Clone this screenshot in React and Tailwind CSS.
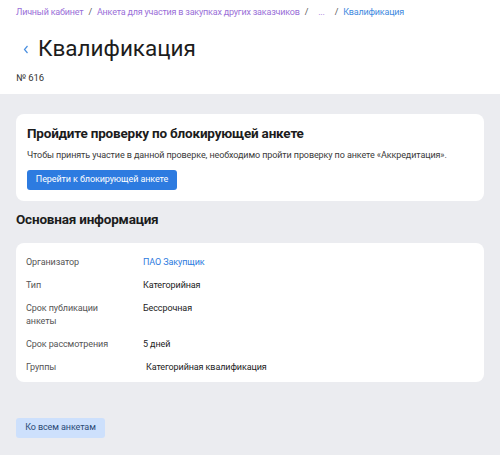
import React from "react";

export default function App() {
  const rows = [
    { label: "Организатор", value: "ПАО Закупщик", link: true },
    { label: "Тип", value: "Категорийная" },
    { label: "Срок публикации анкеты", value: "Бессрочная" },
    { label: "Срок рассмотрения", value: "5 дней" },
    { label: "Группы", value: "Категорийная квалификация", indent: true },
  ];
  return (
    <div className="w-[500px] h-[455px] bg-[#ebecf0] overflow-hidden text-[#222]" style={{ fontFamily: 'Roboto, "Liberation Sans", Arial, sans-serif' }}>
      <div className="bg-white px-4 pt-[6px] h-[94px]">
        <div className="flex items-center whitespace-nowrap text-[9px] leading-[13px] tracking-[-0.2px]">
          <span className="text-[#9a6fd8]">Личный кабинет</span>
          <span className="text-[#555] px-[5px]">/</span>
          <span className="text-[#9a6fd8]">Анкета для участия в закупках других заказчиков</span>
          <span className="text-[#555] px-[5px]">/</span>
          <span className="text-[#9a6fd8] px-[5px]">...</span>
          <span className="text-[#555] px-[5px]">/</span>
          <span className="text-[#3f8ae0]">Квалификация</span>
        </div>
        <div className="flex items-center mt-[14px] h-[30px]">
          <svg width="6" height="9" viewBox="0 0 6 9" className="ml-[7px] mr-[9px] mt-[3px]">
            <path d="M4.5 1 L1.5 4.5 L4.5 8" fill="none" stroke="#4a8fe0" strokeWidth="1.2" />
          </svg>
          <h1 className="text-[22.5px] leading-[30px] text-[#1c1c1c]">Квалификация</h1>
        </div>
        <div className="text-[9.5px] leading-[13px] mt-[8px] text-[#333]">№ 616</div>
      </div>

      <div className="px-4 pt-[20px]">
        <div className="bg-white rounded-lg px-[11px] pt-[10px] pb-[11px]">
          <div className="text-[13.5px] font-bold leading-[18px] text-[#1c1c1c] tracking-[-0.2px]">Пройдите проверку по блокирующей анкете</div>
          <div className="text-[9px] leading-[13px] mt-[7px] text-[#3a3a3a] whitespace-nowrap tracking-[-0.1px]">Чтобы принять участие в данной проверке, необходимо пройти проверку по анкете «Аккредитация».</div>
          <button className="mt-[8px] h-[20px] w-[150px] rounded-[3px] bg-[#2d7be0] text-white text-[9px] whitespace-nowrap tracking-[-0.1px]">Перейти к блокирующей анкете</button>
        </div>

        <div className="text-[13.5px] font-bold mt-[9px] leading-[18px] text-[#1c1c1c] tracking-[-0.2px]">Основная информация</div>

        <div className="bg-white rounded-lg mt-[15px] px-[10px] pt-[8px] pb-[3px] text-[9px] tracking-[-0.1px]">
          {rows.map((r) => (
            <div key={r.label} className="flex py-[5px] leading-[13px]">
              <div className="w-[117px] shrink-0">
                <div className="max-w-[85px] text-[#555]">{r.label}</div>
              </div>
              <div className={(r.link ? "text-[#2d7be0] " : "text-[#222] ") + (r.indent ? "pl-[3px]" : "")}>{r.value}</div>
            </div>
          ))}
        </div>

        <button className="mt-[36px] h-[20px] w-[89px] rounded-[3px] bg-[#cde0fc] text-[#2b4a75] text-[9px] whitespace-nowrap tracking-[-0.1px]">Ко всем анкетам</button>
      </div>
    </div>
  );
}
